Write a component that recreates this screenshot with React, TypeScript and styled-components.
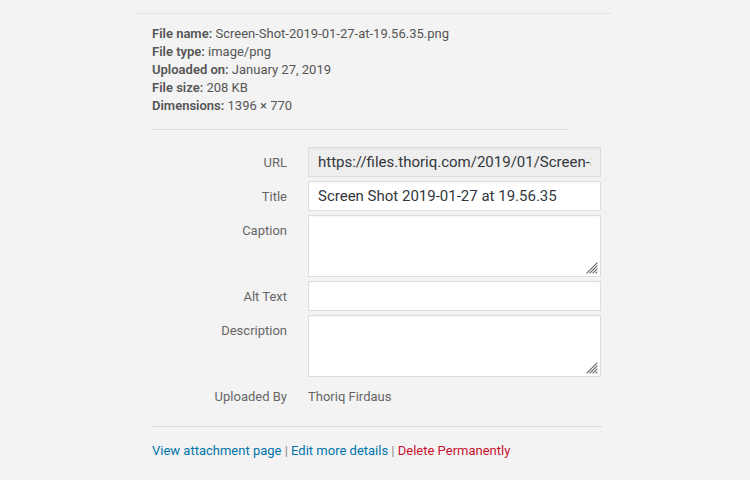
import React from "react";
import styled, { createGlobalStyle } from "styled-components";

const Global = createGlobalStyle`
  html, body { margin: 0; padding: 0; background: #f3f3f3; }
  body { font-family: Roboto, "Noto Sans", "Liberation Sans", sans-serif; -webkit-font-smoothing: antialiased; }
`;

const Page = styled.div`
  width: 750px;
  height: 480px;
  background: #f3f3f3;
  padding-top: 13px;
  box-sizing: border-box;
  overflow: hidden;
`;

const TopRule = styled.div`
  margin-left: 136px;
  width: 476px;
  border-top: 1px solid #e4e4e4;
`;

const Meta = styled.div`
  margin: 11px 0 14px 152px;
  font-size: 13px;
  line-height: 18px;
  color: #555;
`;

const MetaLine = styled.div`
  white-space: nowrap;
  strong { font-weight: 600; color: #555; }
`;

const Rule = styled.div<{ $w: number }>`
  margin-left: 152px;
  width: ${(p) => p.$w}px;
  border-top: 1px solid #dcdcdc;
`;

const Form = styled.div`
  margin: 17px 0 15px 152px;
  display: grid;
  grid-template-columns: 135px 293px;
  column-gap: 21px;
  row-gap: 4px;
  align-items: start;
`;

const Label = styled.label`
  box-sizing: border-box;
  height: 30px;
  text-align: right;
  font-size: 13px;
  line-height: 30px;
  padding-top: 1px;
  color: #666;
  white-space: nowrap;
`;

const Input = styled.input<{ $readonly?: boolean }>`
  box-sizing: border-box;
  width: 293px;
  height: 30px;
  margin: 0;
  padding: 0 9px;
  border: 1px solid #ddd;
  border-radius: 0;
  background: ${(p) => (p.$readonly ? "#eee" : "#fff")};
  font-family: inherit;
  font-size: 15px;
  color: #32373c;
  outline: none;
  box-shadow: inset 0 1px 2px rgba(0, 0, 0, 0.04);
`;

const AreaWrap = styled.div`
  position: relative;
  width: 293px;
  height: 62px;
`;

const Area = styled.textarea`
  box-sizing: border-box;
  display: block;
  width: 293px;
  height: 62px;
  margin: 0;
  padding: 6px 9px;
  border: 1px solid #ddd;
  border-radius: 0;
  background: #fff;
  font-family: inherit;
  font-size: 15px;
  resize: none;
  outline: none;
  box-shadow: inset 0 1px 2px rgba(0, 0, 0, 0.04);
`;

const Grip = styled.svg`
  position: absolute;
  right: 3px;
  bottom: 3px;
  width: 12px;
  height: 12px;
  pointer-events: none;
`;

const Value = styled.div`
  box-sizing: border-box;
  height: 30px;
  font-size: 13px;
  line-height: 30px;
  padding-top: 1px;
  color: #666;
  white-space: nowrap;
`;

const Links = styled.div`
  margin: 14px 0 0 152px;
  font-size: 13px;
  line-height: 20px;
  color: #888;
  white-space: pre;
`;

const Link = styled.a<{ $danger?: boolean }>`
  color: ${(p) => (p.$danger ? "#c8102e" : "#0073aa")};
  text-decoration: none;
`;

function TextArea() {
  return (
    <AreaWrap>
      <Area />
      <Grip viewBox="0 0 12 12">
        <g stroke="#6a6a6a" strokeWidth="1.1" strokeLinecap="square">
          <line x1="1" y1="11" x2="11" y2="1" />
          <line x1="4" y1="11" x2="11" y2="4" />
          <line x1="7" y1="11" x2="11" y2="7" />
          <line x1="10" y1="11" x2="11" y2="10" />
        </g>
      </Grip>
    </AreaWrap>
  );
}

export default function App() {
  return (
    <Page>
      <Global />
      <TopRule />
      <Meta>
        <MetaLine><strong>File name:</strong> Screen-Shot-2019-01-27-at-19.56.35.png</MetaLine>
        <MetaLine><strong>File type:</strong> image/png</MetaLine>
        <MetaLine><strong>Uploaded on:</strong> January 27, 2019</MetaLine>
        <MetaLine><strong>File size:</strong> 208 KB</MetaLine>
        <MetaLine><strong>Dimensions:</strong> 1396 × 770</MetaLine>
      </Meta>
      <Rule $w={415} />
      <Form>
        <Label>URL</Label>
        <Input $readonly readOnly value="https://files.thoriq.com/2019/01/Screen-Shot-2019-01-27-at-19.56.35.png" />
        <Label>Title</Label>
        <Input defaultValue="Screen Shot 2019-01-27 at 19.56.35" />
        <Label>Caption</Label>
        <TextArea />
        <Label>Alt Text</Label>
        <Input />
        <Label>Description</Label>
        <TextArea />
        <Label>Uploaded By</Label>
        <Value>Thoriq Firdaus</Value>
      </Form>
      <Rule $w={450} />
      <Links>
        <Link href="#">View attachment page</Link>
        {" | "}
        <Link href="#">Edit more details</Link>
        {" | "}
        <Link href="#" $danger>Delete Permanently</Link>
      </Links>
    </Page>
  );
}
